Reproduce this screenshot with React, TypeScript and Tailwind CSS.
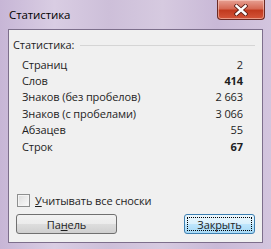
import React from 'react';

const rows: { label: string; value: string; bold?: boolean }[] = [
  { label: 'Страниц', value: '2' },
  { label: 'Слов', value: '414', bold: true },
  { label: 'Знаков (без пробелов)', value: '2 663' },
  { label: 'Знаков (с пробелами)', value: '3 066' },
  { label: 'Абзацев', value: '55' },
  { label: 'Строк', value: '67', bold: true },
];

export default function App() {
  return (
    <div
      className="relative w-[271px] h-[249px] overflow-hidden bg-[linear-gradient(90deg,#c7b6d6_0%,#d9cde3_20%,#cdbfd9_40%,#d6cae0_60%,#c9b9d7_80%,#d3c5de_100%)] text-[11px] tracking-[-0.1px] text-[#1e1e1e]"
      style={{ fontFamily: '"Open Sans", "Noto Sans", sans-serif' }}
    >
      {/* title bar */}
      <div className="flex h-[29px] items-start justify-between">
        <span className="pl-[9px] pt-[6px] text-[11.5px] leading-[18px] text-black">Статистика</span>
        <button className="mr-[6px] flex h-[20px] w-[48px] items-center justify-center rounded-b-[4px] border border-t-0 border-[#6b2a24] bg-[linear-gradient(180deg,#e7a093_0%,#d66a55_45%,#c23a1f_55%,#d4553a_100%)] shadow-[inset_0_0_0_1px_rgba(255,220,210,0.5)]">
          <svg width="14" height="12" viewBox="0 0 14 12">
            <path d="M2.5 2 L11.5 10 M11.5 2 L2.5 10" stroke="#5a1e16" strokeWidth="4.2" strokeLinecap="square" />
            <path d="M2.5 2 L11.5 10 M11.5 2 L2.5 10" stroke="#ffffff" strokeWidth="2.4" strokeLinecap="square" />
          </svg>
        </button>
      </div>

      {/* client area */}
      <div className="mx-[8px] flex h-[214px] flex-col border border-[#7d6f8c] bg-[#f0f0f0] pl-[4px] pr-[7px]">
        <div className="mt-[7px] flex items-center gap-[6px]">
          <span>Статистика:</span>
          <div className="h-px flex-1 border-t border-[#d5d5d5] bg-white" />
        </div>

        <div className="mt-[3px] flex flex-col pl-[9px] pr-[12px]">
          {rows.map((r) => (
            <div key={r.label} className="flex h-[16.4px] items-center justify-between leading-[16px]">
              <span>{r.label}</span>
              <span className={r.bold ? 'font-bold' : ''}>{r.value}</span>
            </div>
          ))}
        </div>

        <div className="flex-1" />

        <label className="flex items-center gap-[5px] pl-[4px]">
          <span className="h-[13px] w-[13px] border border-[#8e8f8f] bg-[linear-gradient(135deg,#dcdcdc,#fbfbfb)] shadow-[inset_0_0_0_1px_#f4f4f4]" />
          <span>
            <span className="underline">У</span>читывать все сноски
          </span>
        </label>

        <div className="mb-[8px] mt-[5px] flex items-center justify-between pl-[3px] pr-[0px]">
          <button className="flex h-[20px] w-[101px] items-center justify-center rounded-[3px] border border-[#707070] bg-[linear-gradient(180deg,#f2f2f2_0%,#ebebeb_50%,#dddddd_51%,#cfcfcf_100%)] leading-none">
            <span>
              Па<span className="underline">н</span>ель
            </span>
          </button>
          <button className="flex h-[20px] w-[71px] items-center justify-center rounded-[3px] border border-[#3c7fb1] bg-[linear-gradient(180deg,#eaf6fd_0%,#d9f0fc_50%,#bee6fd_51%,#a7d9f5_100%)] p-[2px] leading-none">
            <span className="flex h-full w-full items-center justify-center border border-dotted border-black">
              Закрыть
            </span>
          </button>
        </div>
      </div>
    </div>
  );
}
